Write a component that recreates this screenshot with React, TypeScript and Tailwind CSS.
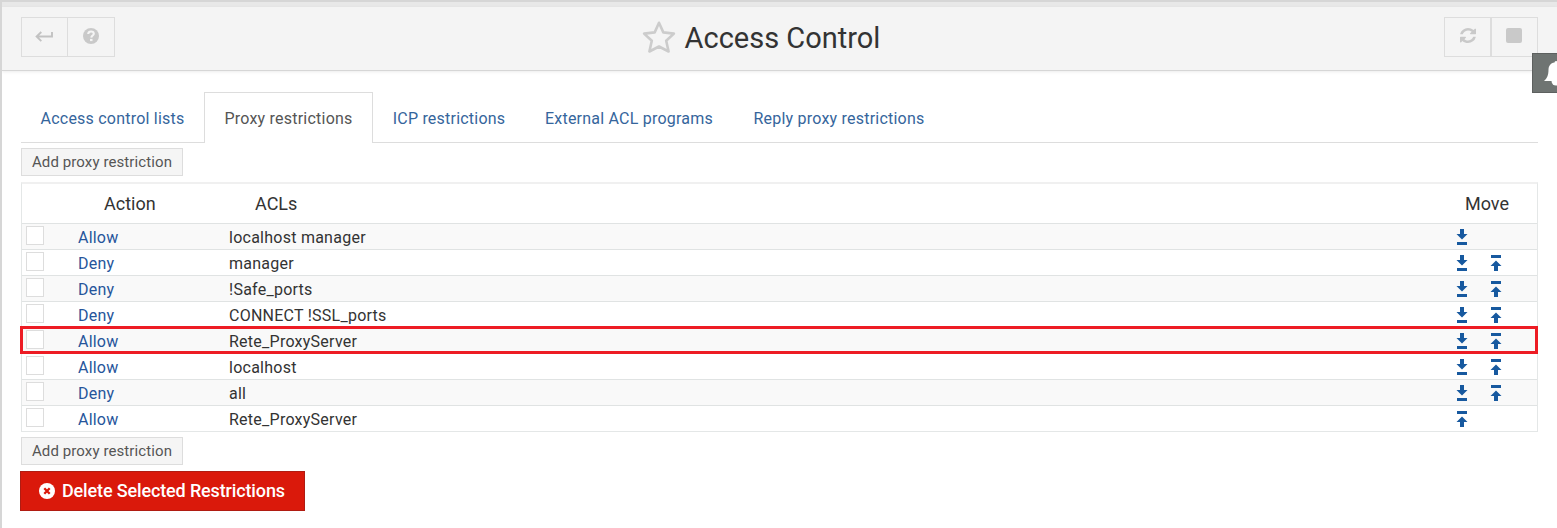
import React from "react";

type Rule = { action: "Allow" | "Deny"; acls: string; down: boolean; up: boolean; highlighted?: boolean };

const rules: Rule[] = [
  { action: "Allow", acls: "localhost manager", down: true, up: false },
  { action: "Deny", acls: "manager", down: true, up: true },
  { action: "Deny", acls: "!Safe_ports", down: true, up: true },
  { action: "Deny", acls: "CONNECT !SSL_ports", down: true, up: true },
  { action: "Allow", acls: "Rete_ProxyServer", down: true, up: true, highlighted: true },
  { action: "Allow", acls: "localhost", down: true, up: true },
  { action: "Deny", acls: "all", down: true, up: true },
  { action: "Allow", acls: "Rete_ProxyServer", down: false, up: true },
];

const tabs = [
  { label: "Access control lists", width: "w-[183px]" },
  { label: "Proxy restrictions", width: "w-[169px]", active: true },
  { label: "ICP restrictions", width: "w-[152px]" },
  { label: "External ACL programs", width: "w-[208px]" },
  { label: "Reply proxy restrictions", width: "w-[212px]" },
];

function ReturnIcon() {
  return (
    <svg width="18" height="12" viewBox="0 0 18 12" fill="none" stroke="#c2c2c2" strokeWidth="1.9">
      <path d="M17 1v4.500H2M6.300 1L1.600 5.500L6.300 10.200" />
    </svg>
  );
}

function HelpIcon() {
  return (
    <svg width="16" height="16" viewBox="0 0 16 16">
      <circle cx="8" cy="8" r="8" fill="#c9c9c9" />
      <path d="M5.200 6.100C5.200 4.300 6.400 3.500 8 3.500c1.700 0 2.800.9 2.800 2.300C10.800 7.500 8.400 7.600 8.300 9.600" fill="none" stroke="#f4f4f4" strokeWidth="2.1" />
      <path d="M7 10.900h2.500v2.200H7z" fill="#f4f4f4" />
    </svg>
  );
}

function RefreshIcon() {
  return (
    <svg width="16" height="15" viewBox="0 0 1536 1536" preserveAspectRatio="none" fill="#c9c9c9">
      <path d="M1511 928q0 5-1 7-64 268-268 434.500t-478 166.500q-146 0-282.500-55t-243.500-157l-129 129q-19 19-45 19t-45-19-19-45v-448q0-26 19-45t45-19h448q26 0 45 19t19 45-19 45l-137 137q71 66 161 102t187 36q134 0 250-65t186-179q11-17 53-117 8-23 30-23h192q13 0 22.500 9.500t9.500 22.500zm25-800v448q0 26-19 45t-45 19h-448q-26 0-45-19t-19-45 19-45l138-138q-148-137-349-137-134 0-250 65t-186 179q-11 17-53 117-8 23-30 23h-199q-13 0-22.500-9.500t-9.500-22.500v-7q65-268 270-434.500t480-166.500q146 0 284 55.500t245 156.500l130-129q19-19 45-19t45 19 19 45z" />
    </svg>
  );
}

function StarIcon() {
  return (
    <svg width="34" height="33" viewBox="0 0 34 33" fill="none" stroke="#cccccc" strokeWidth="2.6" strokeLinejoin="round">
      <path d="M17 1.800L21.300 11.400L31.900 12.600L24.200 19.800L26.600 30.500L17 25.500L7.400 30.500L9.800 19.800L2.100 12.600L12.700 11.400Z" />
    </svg>
  );
}

function BellIcon() {
  return (
    <svg width="24" height="25" viewBox="0 0 24 25" fill="#ffffff">
      <path d="M10.500 1.500a1.500 1.500 0 0 1 3 0C17.500 2 19.500 5 19.500 8.500c0 6 1.500 9 4.500 11.500H0c3-2.500 4.500-5.500 4.500-11.500C4.500 5 6.500 2 10.500 1.500z" />
      <path d="M7.500 20h9a4.500 4.500 0 0 1-9 0z" />
    </svg>
  );
}

function MoveIcon({ up = false }: { up?: boolean }) {
  return (
    <svg width="12" height="16" viewBox="0 0 12 16" fill="#17599f">
      {up ? (
        <path d="M1 0h10v3H1zM6 5.500L11.500 11H8v5H4v-5H.5z" />
      ) : (
        <path d="M1 13h10v3H1zM4 0h4v5h3.500L6 10.500L.5 5H4z" />
      )}
    </svg>
  );
}

function AddButton() {
  return (
    <button className="block h-[28px] w-[162px] border border-[#dddddd] bg-[#f5f5f5] text-[15px] leading-[26px] tracking-[0.1px] whitespace-nowrap text-[#555555]">
      Add proxy restriction
    </button>
  );
}

function RuleRow({ rule, striped }: { rule: Rule; striped: boolean }) {
  return (
    <div className={`relative flex h-[26px] border-t border-[#e0e3e3] ${striped ? "bg-[#f9f9f9]" : "bg-white"}`}>
      <div className="w-[56px] pt-[2px] pl-[4px]">
        <div className="h-[19px] w-[18px] border border-[#dddddd] bg-white" />
      </div>
      <a className="w-[151px] pt-[1px] text-[16px] leading-[25px] tracking-[0.2px] text-[#26559b]">{rule.action}</a>
      <div className="flex-1 pt-[1px] text-[16px] leading-[25px] tracking-[0.25px] text-[#333333]">{rule.acls}</div>
      <div className="flex w-[81px] gap-[21.500px] pt-[5px]">
        {rule.down && <MoveIcon />}
        {rule.up && <MoveIcon up />}
      </div>
      {rule.highlighted && <div className="absolute -top-[2px] -right-px -left-[2px] z-10 h-[28px] border-[3px] border-[#ed1c24]" />}
    </div>
  );
}

export default function App() {
  return (
    <div className="relative h-[528px] w-full overflow-hidden border-t-2 border-l-2 border-[#d6d6d6] bg-white font-[Roboto,sans-serif]">
      <div className="h-[5px] bg-[#e8e8e8]" />
      <header className="flex h-[64px] items-start justify-between border-b border-[#d6d6d6] bg-[#f4f4f4] px-[19px] pt-[10px] shadow-[0_1px_3px_rgba(0,0,0,0.08)]">
        <div className="flex h-[40px] w-[94px] border border-[#dddddd]">
          <button className="flex w-[46px] items-start justify-center border-r border-[#dddddd] pt-[13px] pr-px"><ReturnIcon /></button>
          <button className="flex flex-1 items-start justify-center pt-[10px]"><HelpIcon /></button>
        </div>
        <div className="mr-[37px] flex items-start">
          <div className="mt-[4px] mr-[9px]"><StarIcon /></div>
          <h1 className="mt-[1px] text-[29px] leading-[40px] whitespace-nowrap text-[#333333]">Access Control</h1>
        </div>
        <div className="flex h-[40px] w-[94px] border border-[#dddddd]">
          <button className="flex w-[47px] items-start justify-center border-r-2 border-[#dddddd] pt-[10px] pl-px"><RefreshIcon /></button>
          <button className="flex flex-1 items-start justify-center pt-[10px] pr-px"><span className="h-[15px] w-[16px] rounded-[2px] bg-[#c9c9c9]" /></button>
        </div>
      </header>
      <main className="pt-[21px] pr-[19px] pl-[19px]">
        <nav className="flex h-[51px] border-b border-[#dddddd]">
          {tabs.map((tab) => (
            <a
              key={tab.label}
              className={`${tab.width} h-[51px] border-t text-center text-[16px] leading-[52px] tracking-[0.22px] whitespace-nowrap ${
                tab.active ? "border-x border-[#dddddd] bg-white text-[#555555]" : "border-transparent text-[#35659c]"
              }`}
            >
              {tab.label}
            </a>
          ))}
        </nav>
        <div className="pt-[5px]"><AddButton /></div>
        <div className="mt-[6px] h-[250px] border border-t-2 border-[#e4e7e7] border-t-[#f0f0f0]">
          <div className="flex h-[39px] text-[18px] leading-[40px] text-[#333333]">
            <div className="w-[56px]" />
            <div className="w-[151px] pl-[26px]">Action</div>
            <div className="flex-1 pl-[26px]">ACLs</div>
            <div className="w-[82px] pl-[10px]">Move</div>
          </div>
          {rules.map((rule, i) => <RuleRow key={i} rule={rule} striped={i % 2 === 0} />)}
        </div>
        <div className="pt-[5px]"><AddButton /></div>
        <button className="mt-[6px] -ml-px flex h-[40px] w-[285px] items-center border border-[#b01c12] bg-[#da190b] pl-[18px] text-[18px] font-medium tracking-[-0.14px] whitespace-nowrap text-white">
          <svg className="mr-[7px]" width="16" height="16" viewBox="0 0 16 16">
            <circle cx="8" cy="8" r="8" fill="#fff" />
            <path d="M5.300 5.300l5.400 5.400M10.700 5.300l-5.400 5.400" stroke="#da190b" strokeWidth="2.300" />
          </svg>
          <span className="pb-[2px]">Delete Selected Restrictions</span>
        </button>
      </main>
      <div className="absolute top-[51px] right-0 h-[40px] w-[25px] overflow-hidden border border-r-0 border-[#5d605f] bg-[#6f7472] pt-[7px] pl-[11px]">
        <div className="w-[24px]"><BellIcon /></div>
      </div>
    </div>
  );
}
